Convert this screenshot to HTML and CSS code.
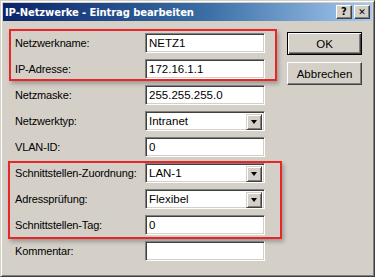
FILE: index.html
```html
<!DOCTYPE html>
<html lang="de">
<head>
  <meta charset="UTF-8" />
  <meta name="viewport" content="width=device-width, initial-scale=1.0" />
  <title>IP-Netzwerke - Eintrag bearbeiten</title>
  <link rel="stylesheet" href="styles.css">
</head>
<body>
  <div class="window">
    <div class="titlebar">
      <span class="title">IP-Netzwerke - Eintrag bearbeiten</span>
      <div class="title-buttons">
        <span class="tbtn">?</span>
        <span class="tbtn close">&#10005;</span>
      </div>
    </div>

    <div class="content">
      <div class="form">
        <div class="mark mark-top">
          <div class="row">
            <label>Netzwerkname:</label>
            <div class="field">NETZ1</div>
          </div>
          <div class="row">
            <label>IP-Adresse:</label>
            <div class="field">172.16.1.1</div>
          </div>
        </div>

        <div class="row">
          <label>Netzmaske:</label>
          <div class="field">255.255.255.0</div>
        </div>
        <div class="row">
          <label>Netzwerktyp:</label>
          <div class="field combo">Intranet<span class="drop"></span></div>
        </div>
        <div class="row">
          <label>VLAN-ID:</label>
          <div class="field">0</div>
        </div>

        <div class="mark mark-bottom">
          <div class="row">
            <label>Schnittstellen-Zuordnung:</label>
            <div class="field combo">LAN-1<span class="drop"></span></div>
          </div>
          <div class="row">
            <label>Adressprüfung:</label>
            <div class="field combo">Flexibel<span class="drop"></span></div>
          </div>
          <div class="row">
            <label>Schnittstellen-Tag:</label>
            <div class="field">0</div>
          </div>
        </div>

        <div class="row">
          <label>Kommentar:</label>
          <div class="field"></div>
        </div>
      </div>

      <div class="actions">
        <button class="btn default">OK</button>
        <button class="btn">Abbrechen</button>
      </div>
    </div>
  </div>
</body>
</html>
```

FILE: styles.css
```css
body {
  margin: 0;
  background-color: #d4d0c8;
  font-family: "Liberation Sans", Arial, sans-serif;
  font-size: 11px;
  color: #000;
}

.window {
  width: 375px;
  height: 277px;
  box-sizing: border-box;
  background-color: #d4d0c8;
  border: 1px solid;
  border-color: #d4d0c8 #404040 #404040 #d4d0c8;
  box-shadow: inset 1px 1px #fff, inset -1px -1px #808080;
  padding: 2px;
  overflow: hidden;
}

.titlebar {
  height: 18px;
  display: flex;
  align-items: center;
  justify-content: space-between;
  padding: 0 2px 0 2px;
  background: linear-gradient(to right, #0a246a, #3a6ea5 55%, #a6caf0);
}

.title {
  color: #fff;
  font-family: "DejaVu Sans", Verdana, sans-serif;
  font-weight: bold;
  font-size: 10px;
  letter-spacing: -0.1px;
}

.title-buttons {
  display: flex;
  gap: 2px;
}

.tbtn {
  width: 16px;
  height: 14px;
  box-sizing: border-box;
  background-color: #d4d0c8;
  border: 1px solid;
  border-color: #fff #404040 #404040 #fff;
  box-shadow: inset -1px -1px #808080;
  display: flex;
  align-items: center;
  justify-content: center;
  font-family: "DejaVu Sans", sans-serif;
  font-weight: bold;
  font-size: 10px;
  line-height: 1;
}

.tbtn.close {
  font-size: 9px;
}

.content {
  display: flex;
  gap: 22px;
  padding: 12px 0 0 12px;
}

.form {
  width: 250px;
  display: flex;
  flex-direction: column;
  gap: 6px;
}

.row {
  display: flex;
  align-items: center;
  height: 20px;
}

.row label {
  width: 130px;
  flex: none;
  letter-spacing: -0.15px;
}

.field {
  position: relative;
  width: 120px;
  height: 20px;
  box-sizing: border-box;
  background-color: #fff;
  border: 1px solid;
  border-color: #808080 #fff #fff #808080;
  box-shadow: inset 1px 1px #404040, inset -1px -1px #d4d0c8;
  padding: 0 3px;
  line-height: 18px;
  font-size: 11.5px;
}

.combo .drop {
  position: absolute;
  right: 2px;
  top: 2px;
  width: 16px;
  height: 16px;
  box-sizing: border-box;
  background-color: #d4d0c8;
  border: 1px solid;
  border-color: #d4d0c8 #404040 #404040 #d4d0c8;
  box-shadow: inset 1px 1px #fff, inset -1px -1px #808080;
}

.combo .drop::after {
  content: "";
  position: absolute;
  left: 4px;
  top: 5px;
  border-left: 3.5px solid transparent;
  border-right: 3.5px solid transparent;
  border-top: 4px solid #000;
}

.mark {
  display: flex;
  flex-direction: column;
  gap: 6px;
  border: 2px solid #e8262a;
  box-shadow: 2px 3px 4px rgba(0, 0, 0, 0.25);
}

.mark-top {
  margin: -4px -12px -2px -6px;
  padding: 2px 10px 0 4px;
}

.mark-bottom {
  margin: -2px -17px -4px -7px;
  padding: 0 15px 2px 5px;
}

.actions {
  display: flex;
  flex-direction: column;
  gap: 7px;
  margin-top: -1px;
}

.btn {
  width: 75px;
  height: 23px;
  box-sizing: border-box;
  background-color: #d4d0c8;
  border: 1px solid;
  border-color: #fff #404040 #404040 #fff;
  box-shadow: inset -1px -1px #808080;
  font-family: "Liberation Sans", Arial, sans-serif;
  font-size: 11.5px;
  padding: 0;
  color: #000;
}

.btn.default {
  border: 1px solid #000;
  box-shadow: inset 1px 1px #fff, inset -1px -1px #404040, inset -2px -2px #808080;
}
```
